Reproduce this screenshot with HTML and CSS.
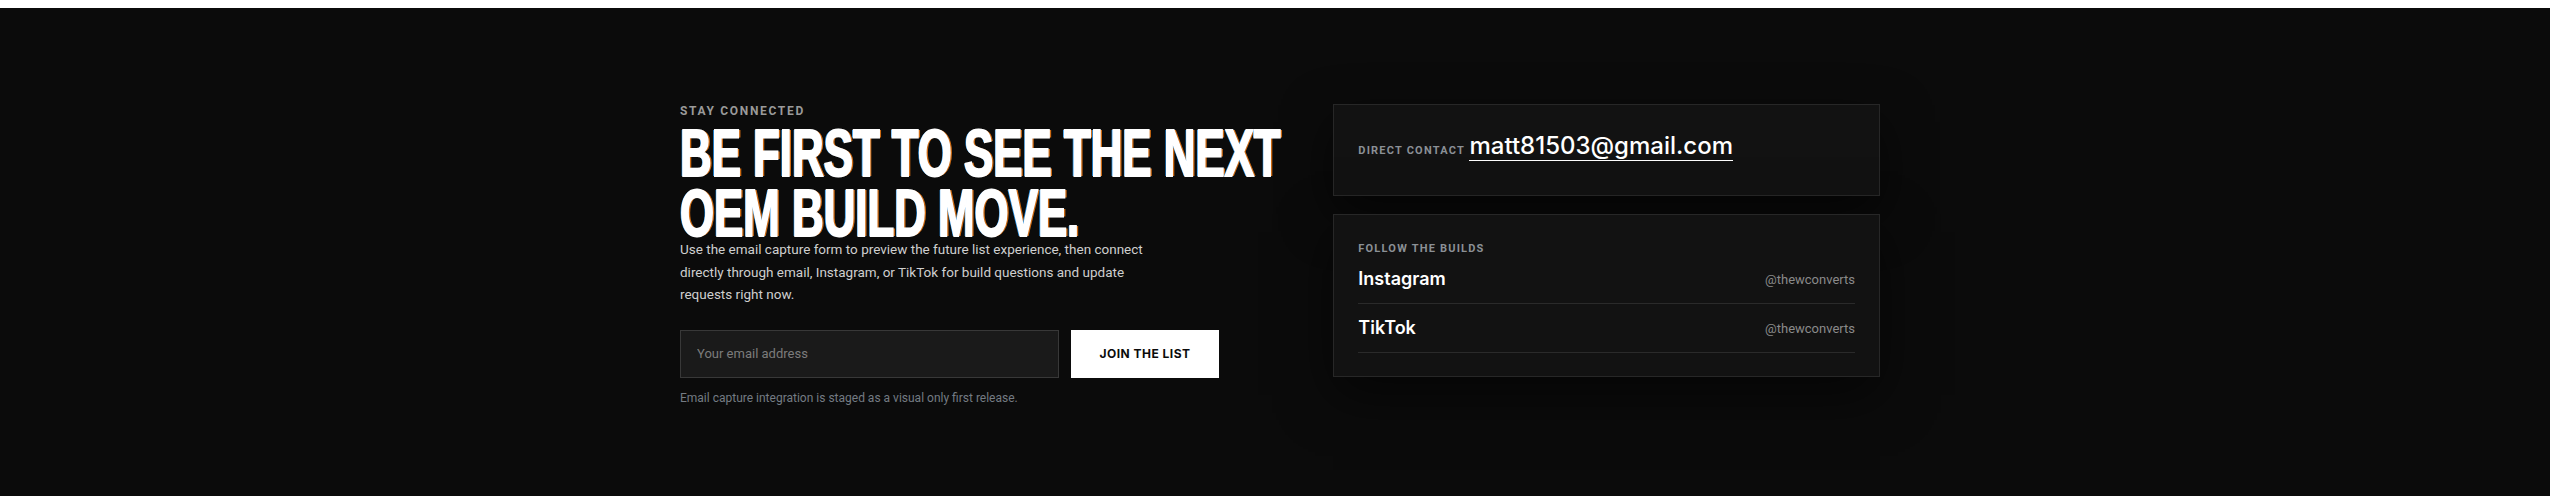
FILE: index.html
```html
<!DOCTYPE html>
<html lang="en">
<head>
    <meta charset="UTF-8">
    <title>Stay connected</title>
    <link rel="stylesheet" href="styles.css">
</head>
<body>
    <section class="connect">
        <div class="wrap">
            <div class="intro">
                <p class="eyebrow">Stay connected</p>
                <h2 class="headline">
                    <span>Be first to see the next</span>
                    <span>OEM build move.</span>
                </h2>
                <p class="lead">Use the email capture form to preview the future list experience, then connect directly through email, Instagram, or TikTok for build questions and update requests right now.</p>
                <form class="signup">
                    <input type="email" placeholder="Your email address">
                    <button type="button">Join the list</button>
                </form>
                <p class="note">Email capture integration is staged as a visual only first release.</p>
            </div>
            <div class="contact">
                <div class="card card-direct">
                    <p><span class="eyebrow small">Direct contact</span> <a href="mailto:matt81503@gmail.com">matt81503@gmail.com</a></p>
                </div>
                <div class="card card-social">
                    <p class="eyebrow small">Follow the builds</p>
                    <ul class="socials">
                        <li><a href="#">Instagram</a><span>@thewconverts</span></li>
                        <li><a href="#">TikTok</a><span>@thewconverts</span></li>
                    </ul>
                </div>
            </div>
        </div>
    </section>
</body>
</html>
```

FILE: styles.css
```css
html {
    background: #fff;
}

body {
    margin: 8px 0 0;
    min-height: 488px;
    background: #0b0b0b;
    color: #fff;
    font-family: Inter, "Liberation Sans", sans-serif;
}

.connect {
    padding: 96px 0 60px;
}

.wrap {
    width: 1200px;
    padding-left: 10px;
    margin: 0 auto;
    display: grid;
    grid-template-columns: minmax(0, 1.1fr) minmax(0, 1fr);
    column-gap: 52px;
    align-items: start;
}

.eyebrow {
    margin: 0 0 5px;
    font-family: Roboto, sans-serif;
    font-size: 12px;
    line-height: 1.2;
    font-weight: 700;
    letter-spacing: 0.14em;
    text-transform: uppercase;
    color: #9a9a9a;
}

.eyebrow.small {
    font-size: 11px;
    letter-spacing: 0.11em;
    color: #8b9096;
}

/* condensed display face faked from Liberation Sans Bold */
.headline {
    margin: 0 0 -5px;
    font-family: "Liberation Sans", sans-serif;
    font-size: 66px;
    line-height: 60px;
    font-weight: 700;
    text-transform: uppercase;
    white-space: nowrap;
    -webkit-text-stroke: 2px #fff;
    transform: scaleX(0.664);
    transform-origin: left top;
    text-shadow: -2px 0 rgba(40, 160, 255, 0.9), 3px 0 rgba(255, 130, 20, 0.8);
}

.headline span {
    display: block;
}

.lead {
    max-width: 475px;
    margin: 0;
    font-family: Roboto, sans-serif;
    font-size: 13.5px;
    line-height: 22.4px;
    color: #cfcfcf;
}

.signup {
    display: flex;
    gap: 12px;
    width: 539px;
    margin-top: 24px;
}

.signup input {
    flex: 1;
    height: 48px;
    box-sizing: border-box;
    padding: 0 16px;
    border: 1px solid #383838;
    background: #1a1a1a;
    color: #fff;
    font-family: Roboto, sans-serif;
    font-size: 13px;
    outline: none;
}

.signup input::placeholder {
    color: #7c7c7c;
}

.signup button {
    width: 148px;
    height: 48px;
    border: none;
    background: #fff;
    color: #0b0b0b;
    font-family: Inter, sans-serif;
    font-size: 12px;
    font-weight: 700;
    letter-spacing: 0.04em;
    text-transform: uppercase;
    cursor: pointer;
}

.note {
    margin: 11px 0 0;
    font-family: Roboto, sans-serif;
    font-size: 12px;
    line-height: 18px;
    color: #747b83;
}

.contact {
    display: flex;
    flex-direction: column;
    gap: 18px;
}

.card {
    border: 1px solid #272727;
    background: #121212;
    box-shadow: 0 18px 50px rgba(0, 0, 0, 0.55);
}

.card-direct {
    padding: 27px 24px 33px;
}

.card-direct p {
    margin: 0;
    line-height: 28px;
    white-space: nowrap;
}

.card-direct .eyebrow {
    margin: 0;
}

.card-direct a {
    color: #fff;
    font-size: 24px;
    font-weight: 500;
    text-decoration: none;
    border-bottom: 1px solid #fff;
}

.card-social {
    padding: 27px 24px 23px;
}

.card-social .eyebrow {
    margin: 0;
}

.socials {
    list-style: none;
    margin: 0;
    padding: 0;
}

.socials li {
    display: flex;
    justify-content: space-between;
    align-items: center;
    padding: 12px 0;
    border-bottom: 1px solid #2a2a2a;
}

.socials a {
    color: #fff;
    font-size: 18px;
    line-height: 24px;
    font-weight: 600;
    text-decoration: none;
}

.socials span {
    font-family: Roboto, sans-serif;
    font-size: 13px;
    color: #8a8a8a;
}
```
